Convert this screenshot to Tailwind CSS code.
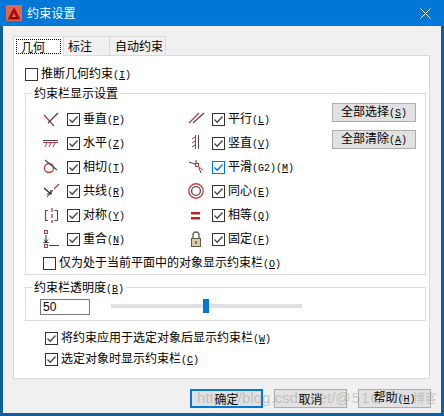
<!DOCTYPE html>
<html lang="zh">
<head>
<meta charset="utf-8" />
<title>约束设置</title>
<script src="https://cdn.jsdelivr.net/npm/@tailwindcss/browser@4"></script>
</head>
<body class="w-[444px] h-[416px] overflow-hidden bg-[#0078d7] font-['Noto_Sans_CJK_SC','Liberation_Sans',sans-serif] text-[12px] leading-[14px] text-black">
  <div class="relative w-[444px] h-[416px] flex flex-col border-l-[3px] border-r-[3px] border-b-[3px] border-[#0a5f9f]">

    <!-- Title bar -->
    <div class="h-[26px] -mx-[3px] px-[6px] flex items-center bg-[#0078d7] text-white shrink-0">
      <svg class="w-[16px] h-[16px]" viewBox="0 0 16 16">
        <rect width="16" height="16" fill="#e2674f" />
        <path d="M1.5 14.5 L8 2 L14.5 14.5 L11.5 14.5 L8 8 L4.5 14.5 Z" fill="#a80f12" />
        <path d="M5 12 H11 V14.5 H5 Z" fill="#8c0c0e" />
      </svg>
      <span class="ml-[5px] tracking-[0.2px]">约束设置</span>
      <svg class="ml-auto mr-[7px] w-[11px] h-[11px]" viewBox="0 0 11 11">
        <path d="M0.5 0.5 L10.5 10.5 M10.5 0.5 L0.5 10.5" stroke="#fff" stroke-width="1" fill="none" />
      </svg>
    </div>

    <!-- Body -->
    <div class="flex-1 bg-[#f0f0f0] pt-[10px] pl-[10px]">
      <!-- Tabs -->
      <div class="flex h-[19px]">
        <div class="relative z-10 w-[51px] h-[20px] p-[2px] bg-white border border-b-0 border-[#d9d9d9]">
          <div class="h-[15px] pl-[4px] border border-dotted border-black leading-[13px]">几何</div>
        </div>
        <div class="w-[46px] h-[19px] pl-[4px] pt-[2px] border-t border-r border-[#d9d9d9]">标注</div>
        <div class="w-[56px] h-[19px] pl-[5px] pt-[2px] border-t border-r border-[#d9d9d9]">自动约束</div>
      </div>

      <!-- Pane -->
      <div class="w-[417px] h-[324px] bg-white border border-[#d9d9d9] pl-[11px] pt-[11px]">
        <label class="flex items-center h-[14px]">
          <span class="w-[13px] h-[13px] border border-[#333] bg-white shrink-0"></span>
          <span class="ml-[3px]">推断几何约束<span class="font-['Liberation_Mono'] text-[10px]">(<u>I</u>)</span></span>
        </label>

        <!-- Constraint bar settings -->
        <fieldset class="mt-[5px] w-[401px] h-[189px] border border-[#dcdcdc]">
          <legend class="ml-[6px] px-[2px] h-[14px]">约束栏显示设置</legend>
          <div class="flex items-start pl-[16px] pt-[3px]">
            <!-- Column 1 -->
            <div class="w-[145px] pt-[4px]">
              <div class="flex items-center h-[24px]">
                <svg class="w-[25px] h-[24px]" viewBox="0 0 25 24" fill="none"><path d="M2 8 L12 19" stroke="#b5373c" stroke-width="1.2" /><path d="M6 16 L16 6" stroke="#444" stroke-width="1.2" /></svg>
                <svg class="w-[13px] h-[13px]" viewBox="0 0 13 13"><rect x="0.5" y="0.5" width="12" height="12" fill="#fff" stroke="#333" /><path d="M2.5 6.5 L5.2 9.2 L10.5 3.5" fill="none" stroke="#444" stroke-width="1.3" /></svg>
                <span class="ml-[3px]">垂直<span class="font-['Liberation_Mono'] text-[10px]">(<u>P</u>)</span></span>
              </div>
              <div class="flex items-center h-[24px]">
                <svg class="w-[25px] h-[24px]" viewBox="0 0 25 24" fill="none"><path d="M1 9.5 H16" stroke="#444" /><path d="M1 11.5 H16" stroke="#b5373c" /><path d="M3 16 L5 12 M7 16 L9 12 M11 16 L13 12" stroke="#b5373c" /></svg>
                <svg class="w-[13px] h-[13px]" viewBox="0 0 13 13"><rect x="0.5" y="0.5" width="12" height="12" fill="#fff" stroke="#333" /><path d="M2.5 6.5 L5.2 9.2 L10.5 3.5" fill="none" stroke="#444" stroke-width="1.3" /></svg>
                <span class="ml-[3px]">水平<span class="font-['Liberation_Mono'] text-[10px]">(<u>Z</u>)</span></span>
              </div>
              <div class="flex items-center h-[24px]">
                <svg class="w-[25px] h-[24px]" viewBox="0 0 25 24" fill="none"><circle cx="7" cy="13" r="4.5" stroke="#c0392f" stroke-width="1.3" /><path d="M3 5 L15 15" stroke="#444" stroke-width="1.1" /></svg>
                <svg class="w-[13px] h-[13px]" viewBox="0 0 13 13"><rect x="0.5" y="0.5" width="12" height="12" fill="#fff" stroke="#333" /><path d="M2.5 6.5 L5.2 9.2 L10.5 3.5" fill="none" stroke="#444" stroke-width="1.3" /></svg>
                <span class="ml-[3px]">相切<span class="font-['Liberation_Mono'] text-[10px]">(<u>T</u>)</span></span>
              </div>
              <div class="flex items-center h-[24px]">
                <svg class="w-[25px] h-[24px]" viewBox="0 0 25 24" fill="none"><path d="M2 9 L9 15 M9 11 V15 H5" stroke="#222" stroke-width="1.2" /><path d="M5 18 L11 11" stroke="#444" /><path d="M12 10 L17 5" stroke="#c0392f" stroke-width="1.2" /></svg>
                <svg class="w-[13px] h-[13px]" viewBox="0 0 13 13"><rect x="0.5" y="0.5" width="12" height="12" fill="#fff" stroke="#333" /><path d="M2.5 6.5 L5.2 9.2 L10.5 3.5" fill="none" stroke="#444" stroke-width="1.3" /></svg>
                <span class="ml-[3px]">共线<span class="font-['Liberation_Mono'] text-[10px]">(<u>R</u>)</span></span>
              </div>
              <div class="flex items-center h-[24px]">
                <svg class="w-[25px] h-[24px]" viewBox="0 0 25 24" fill="none"><path d="M6 7.5 H3.5 V17.5 H6" stroke="#a8302f" stroke-width="1.2" /><path d="M10 5 V20" stroke="#a8302f" stroke-width="1.2" stroke-dasharray="4 2" /><path d="M12.5 7.5 H15.5 V17.5 H12.5" stroke="#444" /></svg>
                <svg class="w-[13px] h-[13px]" viewBox="0 0 13 13"><rect x="0.5" y="0.5" width="12" height="12" fill="#fff" stroke="#333" /><path d="M2.5 6.5 L5.2 9.2 L10.5 3.5" fill="none" stroke="#444" stroke-width="1.3" /></svg>
                <span class="ml-[3px]">对称<span class="font-['Liberation_Mono'] text-[10px]">(<u>Y</u>)</span></span>
              </div>
              <div class="flex items-center h-[24px]">
                <svg class="w-[25px] h-[24px]" viewBox="0 0 25 24" fill="none"><rect x="2.5" y="3.5" width="3" height="3" stroke="#b5373c" /><path d="M4 8 V15 M2 12.5 L4 15 L6 12.5 M1.5 15.5 H6.5" stroke="#333" /><rect x="2.5" y="17.5" width="3" height="3" stroke="#b5373c" /><path d="M7 18.5 H17" stroke="#444" /></svg>
                <svg class="w-[13px] h-[13px]" viewBox="0 0 13 13"><rect x="0.5" y="0.5" width="12" height="12" fill="#fff" stroke="#333" /><path d="M2.5 6.5 L5.2 9.2 L10.5 3.5" fill="none" stroke="#444" stroke-width="1.3" /></svg>
                <span class="ml-[3px]">重合<span class="font-['Liberation_Mono'] text-[10px]">(<u>N</u>)</span></span>
              </div>
            </div>

            <!-- Column 2 -->
            <div class="w-[145px] pt-[4px]">
              <div class="flex items-center h-[24px]">
                <svg class="w-[25px] h-[24px]" viewBox="0 0 25 24" fill="none"><path d="M2 16 L12 6" stroke="#b5373c" stroke-width="1.2" /><path d="M6 16 L17 6" stroke="#444" stroke-width="1.1" /></svg>
                <svg class="w-[13px] h-[13px]" viewBox="0 0 13 13"><rect x="0.5" y="0.5" width="12" height="12" fill="#fff" stroke="#333" /><path d="M2.5 6.5 L5.2 9.2 L10.5 3.5" fill="none" stroke="#444" stroke-width="1.3" /></svg>
                <span class="ml-[3px]">平行<span class="font-['Liberation_Mono'] text-[10px]">(<u>L</u>)</span></span>
              </div>
              <div class="flex items-center h-[24px]">
                <svg class="w-[25px] h-[24px]" viewBox="0 0 25 24" fill="none"><path d="M11.5 4 V18" stroke="#444" /><path d="M8.5 4 V18" stroke="#b5373c" /><path d="M5 8 L8 6 M5 12 L8 10 M5 16 L8 14" stroke="#b5373c" /></svg>
                <svg class="w-[13px] h-[13px]" viewBox="0 0 13 13"><rect x="0.5" y="0.5" width="12" height="12" fill="#fff" stroke="#333" /><path d="M2.5 6.5 L5.2 9.2 L10.5 3.5" fill="none" stroke="#444" stroke-width="1.3" /></svg>
                <span class="ml-[3px]">竖直<span class="font-['Liberation_Mono'] text-[10px]">(<u>V</u>)</span></span>
              </div>
              <div class="flex items-center h-[24px]">
                <svg class="w-[25px] h-[24px]" viewBox="0 0 25 24" fill="none"><path d="M2 7 L9 9.5 M9 5 V8" stroke="#444" /><rect x="8.5" y="8.5" width="3" height="3" stroke="#c0392f" /><path d="M12 12 L16 15" stroke="#c0392f" /><path d="M12 13 L14 18" stroke="#444" /></svg>
                <svg class="w-[13px] h-[13px]" viewBox="0 0 13 13"><rect x="0.5" y="0.5" width="12" height="12" fill="#fff" stroke="#0078d7" /><path d="M2.5 6.5 L5.2 9.2 L10.5 3.5" fill="none" stroke="#0078d7" stroke-width="1.3" /></svg>
                <span class="ml-[3px]">平滑<span class="font-['Liberation_Mono'] text-[10px]">(G2)(<u>M</u>)</span></span>
              </div>
              <div class="flex items-center h-[24px]">
                <svg class="w-[25px] h-[24px]" viewBox="0 0 25 24" fill="none"><circle cx="9" cy="12" r="7.2" stroke="#c8453f" stroke-width="1.4" /><circle cx="9" cy="12" r="4.4" stroke="#555" stroke-width="1.4" /></svg>
                <svg class="w-[13px] h-[13px]" viewBox="0 0 13 13"><rect x="0.5" y="0.5" width="12" height="12" fill="#fff" stroke="#333" /><path d="M2.5 6.5 L5.2 9.2 L10.5 3.5" fill="none" stroke="#444" stroke-width="1.3" /></svg>
                <span class="ml-[3px]">同心<span class="font-['Liberation_Mono'] text-[10px]">(<u>E</u>)</span></span>
              </div>
              <div class="flex items-center h-[24px]">
                <svg class="w-[25px] h-[24px]" viewBox="0 0 25 24" fill="none"><rect x="4" y="9" width="9" height="2.5" fill="#b02a2c" /><rect x="4" y="14" width="9" height="2.5" fill="#b02a2c" /></svg>
                <svg class="w-[13px] h-[13px]" viewBox="0 0 13 13"><rect x="0.5" y="0.5" width="12" height="12" fill="#fff" stroke="#333" /><path d="M2.5 6.5 L5.2 9.2 L10.5 3.5" fill="none" stroke="#444" stroke-width="1.3" /></svg>
                <span class="ml-[3px]">相等<span class="font-['Liberation_Mono'] text-[10px]">(<u>Q</u>)</span></span>
              </div>
              <div class="flex items-center h-[24px]">
                <svg class="w-[25px] h-[24px]" viewBox="0 0 25 24" fill="none"><path d="M6 11 V8 Q6 5 9 5 Q12 5 12 8 V11" stroke="#666" stroke-width="1.4" /><rect x="4.5" y="11.5" width="9" height="8" fill="#dccba4" stroke="#5c5a50" /><path d="M9 14 V17" stroke="#5c5a50" stroke-width="1.4" /></svg>
                <svg class="w-[13px] h-[13px]" viewBox="0 0 13 13"><rect x="0.5" y="0.5" width="12" height="12" fill="#fff" stroke="#333" /><path d="M2.5 6.5 L5.2 9.2 L10.5 3.5" fill="none" stroke="#444" stroke-width="1.3" /></svg>
                <span class="ml-[3px]">固定<span class="font-['Liberation_Mono'] text-[10px]">(<u>F</u>)</span></span>
              </div>
            </div>

            <!-- Select / clear buttons -->
            <div class="flex flex-col gap-[8px]">
              <button class="w-[84px] h-[19px] bg-[#e1e1e1] border border-[#adadad]">全部选择<span class="font-['Liberation_Mono'] text-[10px]">(<u>S</u>)</span></button>
              <button class="w-[84px] h-[19px] bg-[#e1e1e1] border border-[#adadad]">全部清除<span class="font-['Liberation_Mono'] text-[10px]">(<u>A</u>)</span></button>
            </div>
          </div>
          <label class="flex items-center h-[14px] mt-[5px] ml-[17px]">
            <span class="w-[13px] h-[13px] border border-[#333] bg-white shrink-0"></span>
            <span class="ml-[3px]">仅为处于当前平面中的对象显示约束栏<span class="font-['Liberation_Mono'] text-[10px]">(<u>O</u>)</span></span>
          </label>
        </fieldset>

        <!-- Transparency -->
        <fieldset class="mt-[5px] w-[401px] h-[41px] border border-[#dcdcdc]">
          <legend class="ml-[6px] px-[2px] h-[14px]">约束栏透明度<span class="font-['Liberation_Mono'] text-[10px]">(<u>B</u>)</span></legend>
          <div class="flex items-start pl-[14px] pt-[5px]">
            <input class="w-[50px] h-[16px] border border-[#7a7a7a] pl-[2px] font-['Liberation_Sans'] text-[12px]" value="50" />
            <div class="relative ml-[21px] mt-[5px] w-[191px] h-[4px] bg-[#e0e0e0]">
              <div class="absolute left-[92px] -top-[5px] w-[6px] h-[14px] bg-[#0078d7]"></div>
            </div>
          </div>
        </fieldset>

        <label class="flex items-center h-[14px] mt-[10px] ml-[20px]">
          <svg class="w-[13px] h-[13px]" viewBox="0 0 13 13"><rect x="0.5" y="0.5" width="12" height="12" fill="#fff" stroke="#333" /><path d="M2.5 6.5 L5.2 9.2 L10.5 3.5" fill="none" stroke="#444" stroke-width="1.3" /></svg>
          <span class="ml-[3px]">将约束应用于选定对象后显示约束栏<span class="font-['Liberation_Mono'] text-[10px]">(<u>W</u>)</span></span>
        </label>
        <label class="flex items-center h-[14px] mt-[7px] ml-[20px]">
          <svg class="w-[13px] h-[13px]" viewBox="0 0 13 13"><rect x="0.5" y="0.5" width="12" height="12" fill="#fff" stroke="#333" /><path d="M2.5 6.5 L5.2 9.2 L10.5 3.5" fill="none" stroke="#444" stroke-width="1.3" /></svg>
          <span class="ml-[3px]">选定对象时显示约束栏<span class="font-['Liberation_Mono'] text-[10px]">(<u>C</u>)</span></span>
        </label>
      </div>

      <!-- Footer -->
      <div class="flex justify-end gap-[11px] mt-[10px] pr-[10px]">
        <button class="w-[73px] h-[19px] bg-[#e1e1e1] border-2 border-[#0078d7]">确定</button>
        <button class="w-[73px] h-[19px] bg-[#e1e1e1] border border-[#adadad]">取消</button>
        <button class="w-[73px] h-[19px] bg-[#e1e1e1] border border-[#adadad]">帮助<span class="font-['Liberation_Mono'] text-[10px]">(<u>H</u>)</span></button>
      </div>
    </div>

    <!-- Watermark laid over the dialog -->
    <div class="absolute left-[194px] top-[389px] whitespace-nowrap font-['Liberation_Sans','Noto_Sans_CJK_SC',sans-serif] text-[15px] leading-[18px] text-[#8c8c8c]/40">https://blog.csdn.net/<span class="tracking-[1px]">@51CTO</span><span class="ml-[8px] text-[12px]">博客</span></div>
  </div>
</body>
</html>
